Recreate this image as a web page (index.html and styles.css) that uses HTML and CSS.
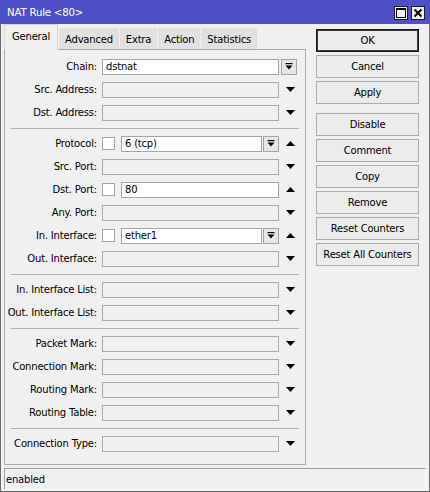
FILE: index.html
```html
<!DOCTYPE html>
<html>
<head>
<meta charset="utf-8">
<title>NAT Rule</title>
<link rel="stylesheet" href="styles.css">
</head>
<body>
<div class="window">
  <div class="titlebar">
    <span class="title">NAT Rule &lt;80&gt;</span>
    <div class="tb-btns">
      <span class="tb-btn"><svg width="12" height="12" viewBox="0 0 12 12"><rect x="1.5" y="1.5" width="9" height="9" fill="none" stroke="#000"/><rect x="1" y="1" width="10" height="2" fill="#000"/></svg></span>
      <span class="tb-btn"><svg width="12" height="12" viewBox="0 0 12 12"><path d="M2.5 2.5 L9.5 9.5 M9.5 2.5 L2.5 9.5" stroke="#000" stroke-width="2"/></svg></span>
    </div>
  </div>
  <div class="frame">
    <div class="main">
      <div class="left">
        <div class="tabs">
          <span class="tab active">General</span>
          <span class="tab">Advanced</span>
          <span class="tab">Extra</span>
          <span class="tab">Action</span>
          <span class="tab">Statistics</span>
        </div>
        <div class="panel">
          <div class="row">
            <span class="label">Chain:</span>
            <div class="field"><span class="input filled">dstnat</span></div>
            <div class="side start"><span class="ddbtn"><svg width="8" height="8" viewBox="0 0 8 8"><rect x="0.5" y="0" width="7" height="1.2" fill="#000"/><polygon points="0.5,2.5 7.5,2.5 4,6.5" fill="#000"/></svg></span></div>
          </div>
          <div class="row">
            <span class="label">Src. Address:</span>
            <div class="field"><span class="input"></span></div>
            <div class="side"><svg class="arrow" width="9" height="5" viewBox="0 0 9 5"><polygon points="0,0 9,0 4.5,5" fill="#000"/></svg></div>
          </div>
          <div class="row">
            <span class="label">Dst. Address:</span>
            <div class="field"><span class="input"></span></div>
            <div class="side"><svg class="arrow" width="9" height="5" viewBox="0 0 9 5"><polygon points="0,0 9,0 4.5,5" fill="#000"/></svg></div>
          </div>
          <div class="sep"></div>
          <div class="row">
            <span class="label">Protocol:</span>
            <div class="field"><span class="check"></span><span class="input filled">6 (tcp)</span><span class="ddbtn"><svg width="8" height="8" viewBox="0 0 8 8"><rect x="0.5" y="0" width="7" height="1.2" fill="#000"/><polygon points="0.5,2.5 7.5,2.5 4,6.5" fill="#000"/></svg></span></div>
            <div class="side"><svg class="arrow" width="9" height="5" viewBox="0 0 9 5"><polygon points="0,5 9,5 4.5,0" fill="#000"/></svg></div>
          </div>
          <div class="row">
            <span class="label">Src. Port:</span>
            <div class="field"><span class="input"></span></div>
            <div class="side"><svg class="arrow" width="9" height="5" viewBox="0 0 9 5"><polygon points="0,0 9,0 4.5,5" fill="#000"/></svg></div>
          </div>
          <div class="row">
            <span class="label">Dst. Port:</span>
            <div class="field"><span class="check"></span><span class="input filled">80</span></div>
            <div class="side"><svg class="arrow" width="9" height="5" viewBox="0 0 9 5"><polygon points="0,5 9,5 4.5,0" fill="#000"/></svg></div>
          </div>
          <div class="row">
            <span class="label">Any. Port:</span>
            <div class="field"><span class="input"></span></div>
            <div class="side"><svg class="arrow" width="9" height="5" viewBox="0 0 9 5"><polygon points="0,0 9,0 4.5,5" fill="#000"/></svg></div>
          </div>
          <div class="row">
            <span class="label">In. Interface:</span>
            <div class="field"><span class="check"></span><span class="input filled">ether1</span><span class="ddbtn"><svg width="8" height="8" viewBox="0 0 8 8"><rect x="0.5" y="0" width="7" height="1.2" fill="#000"/><polygon points="0.5,2.5 7.5,2.5 4,6.5" fill="#000"/></svg></span></div>
            <div class="side"><svg class="arrow" width="9" height="5" viewBox="0 0 9 5"><polygon points="0,5 9,5 4.5,0" fill="#000"/></svg></div>
          </div>
          <div class="row">
            <span class="label">Out. Interface:</span>
            <div class="field"><span class="input"></span></div>
            <div class="side"><svg class="arrow" width="9" height="5" viewBox="0 0 9 5"><polygon points="0,0 9,0 4.5,5" fill="#000"/></svg></div>
          </div>
          <div class="sep"></div>
          <div class="row">
            <span class="label">In. Interface List:</span>
            <div class="field"><span class="input"></span></div>
            <div class="side"><svg class="arrow" width="9" height="5" viewBox="0 0 9 5"><polygon points="0,0 9,0 4.5,5" fill="#000"/></svg></div>
          </div>
          <div class="row">
            <span class="label">Out. Interface List:</span>
            <div class="field"><span class="input"></span></div>
            <div class="side"><svg class="arrow" width="9" height="5" viewBox="0 0 9 5"><polygon points="0,0 9,0 4.5,5" fill="#000"/></svg></div>
          </div>
          <div class="sep"></div>
          <div class="row">
            <span class="label">Packet Mark:</span>
            <div class="field"><span class="input"></span></div>
            <div class="side"><svg class="arrow" width="9" height="5" viewBox="0 0 9 5"><polygon points="0,0 9,0 4.5,5" fill="#000"/></svg></div>
          </div>
          <div class="row">
            <span class="label">Connection Mark:</span>
            <div class="field"><span class="input"></span></div>
            <div class="side"><svg class="arrow" width="9" height="5" viewBox="0 0 9 5"><polygon points="0,0 9,0 4.5,5" fill="#000"/></svg></div>
          </div>
          <div class="row">
            <span class="label">Routing Mark:</span>
            <div class="field"><span class="input"></span></div>
            <div class="side"><svg class="arrow" width="9" height="5" viewBox="0 0 9 5"><polygon points="0,0 9,0 4.5,5" fill="#000"/></svg></div>
          </div>
          <div class="row">
            <span class="label">Routing Table:</span>
            <div class="field"><span class="input"></span></div>
            <div class="side"><svg class="arrow" width="9" height="5" viewBox="0 0 9 5"><polygon points="0,0 9,0 4.5,5" fill="#000"/></svg></div>
          </div>
          <div class="sep"></div>
          <div class="row">
            <span class="label">Connection Type:</span>
            <div class="field"><span class="input"></span></div>
            <div class="side"><svg class="arrow" width="9" height="5" viewBox="0 0 9 5"><polygon points="0,0 9,0 4.5,5" fill="#000"/></svg></div>
          </div>
        </div>
      </div>
      <div class="actions">
        <span class="btn default">OK</span>
        <span class="btn">Cancel</span>
        <span class="btn group-end">Apply</span>
        <span class="btn">Disable</span>
        <span class="btn">Comment</span>
        <span class="btn">Copy</span>
        <span class="btn">Remove</span>
        <span class="btn">Reset Counters</span>
        <span class="btn">Reset All Counters</span>
      </div>
    </div>
    <div class="status">enabled</div>
  </div>
</div>
</body>
</html>
```

FILE: styles.css
```css
* {
  box-sizing: border-box;
}

body {
  margin: 0;
  background: #f0f0f0;
  font-family: "DejaVu Sans", "Liberation Sans", sans-serif;
  font-size: 10px;
  letter-spacing: -0.2px;
  color: #000;
}

.window {
  width: 430px;
  height: 492px;
  display: flex;
  flex-direction: column;
  background: #f0f0f0;
}

.titlebar {
  flex: none;
  height: 24px;
  background: #4f4fc8;
  color: #fff;
  display: flex;
  align-items: center;
  justify-content: space-between;
  padding: 1px 5px 0 7px;
  font-size: 10.2px;
}

.tb-btns {
  display: flex;
  gap: 3px;
}

.tb-btn {
  width: 14px;
  height: 14px;
  border: 1px solid #1e1e1e;
  background: #f0f0f0;
  display: flex;
  align-items: center;
  justify-content: center;
}

.frame {
  flex: 1;
  display: flex;
  flex-direction: column;
  border: 1px solid #6b6b6b;
  border-top: none;
}

.main {
  flex: none;
  height: 441px;
  display: flex;
}

.left {
  width: 305px;
  padding-left: 3px;
  display: flex;
  flex-direction: column;
}

.tabs {
  height: 25px;
  display: flex;
  align-items: flex-end;
}

.tab {
  height: 21px;
  padding: 1px 6px 0;
  margin-right: 1px;
  background: #e1e1e1;
  display: flex;
  align-items: center;
  justify-content: center;
}

.tab.active {
  height: 26px;
  margin-bottom: -1px;
  padding: 0 7px 2px;
  background: #f0f0f0;
  border: 1px solid #d6d6d6;
  border-bottom: none;
  position: relative;
  z-index: 1;
}

.panel {
  height: 416px;
  border: 1px solid #acacac;
  padding-top: 5px;
}

.row {
  height: 23px;
  display: flex;
  align-items: center;
}

.label {
  flex: none;
  width: 97px;
  padding-right: 5px;
  text-align: right;
  white-space: nowrap;
}

.field {
  flex: none;
  width: 177px;
  display: flex;
  align-items: center;
}

.side {
  flex: none;
  width: 22px;
  display: flex;
  align-items: center;
  justify-content: center;
}

.side.start {
  justify-content: flex-start;
  padding-left: 2px;
}

.input {
  flex: 1;
  height: 16px;
  border: 1px solid #acacac;
  background: #f0f0f0;
  padding: 0 3px;
  line-height: 14px;
  white-space: nowrap;
}

.input.filled {
  background: #fff;
  border-color: #a5a5a5;
}

.check {
  flex: none;
  width: 13px;
  height: 13px;
  border: 1px solid #a5a5a5;
  background: #fff;
  margin-right: 6px;
}

.ddbtn {
  flex: none;
  width: 16px;
  height: 16px;
  margin-left: 1px;
  border: 1px solid #a5a5a5;
  background: #e6e6e6;
  display: flex;
  align-items: center;
  justify-content: center;
}

.side.start .ddbtn {
  margin-left: 0;
}

.arrow {
  display: block;
}

.sep {
  margin: 4px 6px 3px;
  border-top: 1px solid #b4b4b4;
}

.actions {
  flex: none;
  width: 103px;
  margin-left: 10px;
  padding-top: 5px;
  display: flex;
  flex-direction: column;
  gap: 3px;
}

.btn {
  height: 23px;
  border: 1px solid #adadad;
  background: #ececec;
  display: flex;
  align-items: center;
  justify-content: center;
  white-space: nowrap;
}

.btn.default {
  border: 1px solid #1a1a1a;
  box-shadow: inset 0 0 0 1px #3a3a3a;
}

.btn.group-end {
  margin-bottom: 6px;
}

.status {
  flex: none;
  height: 22px;
  margin: 3px 3px 1px 3px;
  border-top: 1px solid #a0a0a0;
  border-left: 1px solid #a0a0a0;
  border-right: 1px solid #fbfbfb;
  border-bottom: 1px solid #fbfbfb;
  padding-left: 1px;
  display: flex;
  align-items: center;
}
```
